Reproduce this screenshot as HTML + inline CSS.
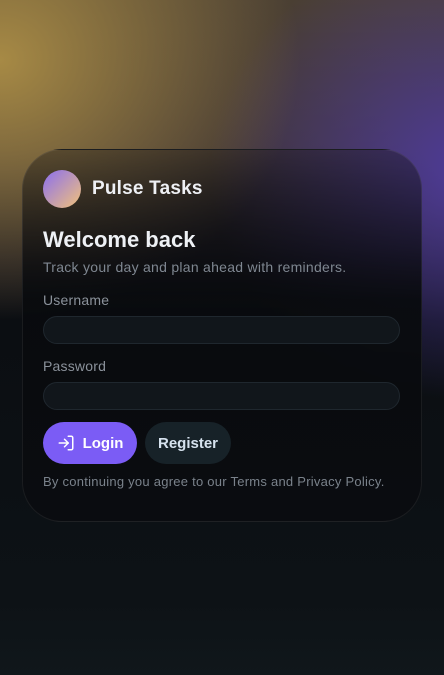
<!DOCTYPE html>
<html><head><meta charset="utf-8"><style>
*{margin:0;padding:0;box-sizing:border-box}
html,body{width:444px;height:675px;overflow:hidden}
body{font-family:"Liberation Sans",sans-serif;position:relative;
background:
radial-gradient(ellipse 300px 260px at 0px 60px, rgba(172,142,70,0.95), rgba(172,142,70,0) 100%),
radial-gradient(ellipse 260px 230px at 470px 170px, rgba(80,60,160,0.95), rgba(80,60,160,0) 100%),
linear-gradient(180deg,#4a3f33 0px,#3e3432 150px,#1a1820 260px,#0b0e12 320px,#0d1216 600px,#10171b 675px);}
.card{position:absolute;left:22px;top:149px;width:400px;height:373px;border-radius:40px;
background:linear-gradient(180deg,rgba(20,18,20,0.35) 0px,rgba(10,11,14,0.7) 100px,rgba(9,11,14,0.94) 150px,#0a0c10 373px);
border:1px solid rgba(255,255,255,0.07)}
.av{position:absolute;left:20px;top:20px;width:38px;height:38px;border-radius:50%;background:linear-gradient(135deg,#8a6ef0,#f2c27a)}
.brand{position:absolute;left:69px;top:28px;color:#eef0f4;font-weight:bold;font-size:19px;letter-spacing:0.2px}
h1{position:absolute;left:20px;top:77px;color:#eef1f5;font-size:22px;font-weight:bold}
.sub{position:absolute;left:20px;top:109px;color:#7f8791;font-size:14px;letter-spacing:0.27px}
.lbl{position:absolute;left:20px;color:#8b929b;font-size:14px;letter-spacing:0.2px}
.inp{position:absolute;left:20px;width:357px;height:28px;border-radius:14px;background:#11161b;border:1px solid #1f272e}
.btn{position:absolute;top:272px;height:42px;border-radius:21px;font-size:15px;font-weight:bold;display:flex;align-items:center;justify-content:center}
.login{left:20px;width:94px;background:#7b5cf5;color:#fff}
.reg{left:122px;width:86px;background:#172228;color:#d6e2ee}
.foot{position:absolute;left:20px;top:324px;color:#7a828b;font-size:13px;letter-spacing:0.25px}
</style></head><body>
<div class="card">
<div class="av"></div>
<div class="brand">Pulse Tasks</div>
<h1>Welcome back</h1>
<div class="sub">Track your day and plan ahead with reminders.</div>
<div class="lbl" style="top:142px">Username</div>
<div class="inp" style="top:166px"></div>
<div class="lbl" style="top:208px">Password</div>
<div class="inp" style="top:232px"></div>
<div class="btn login"><svg width="18" height="18" viewBox="0 0 24 24" fill="none" stroke="#fff" stroke-width="2" stroke-linecap="round" stroke-linejoin="round" style="margin-right:8px"><path d="M15 3h4a2 2 0 0 1 2 2v14a2 2 0 0 1-2 2h-4"/><path d="M10 17l5-5-5-5"/><path d="M15 12H3"/></svg>Login</div>
<div class="btn reg">Register</div>
<div class="foot">By continuing you agree to our Terms and Privacy Policy.</div>
</div>
</body></html>
